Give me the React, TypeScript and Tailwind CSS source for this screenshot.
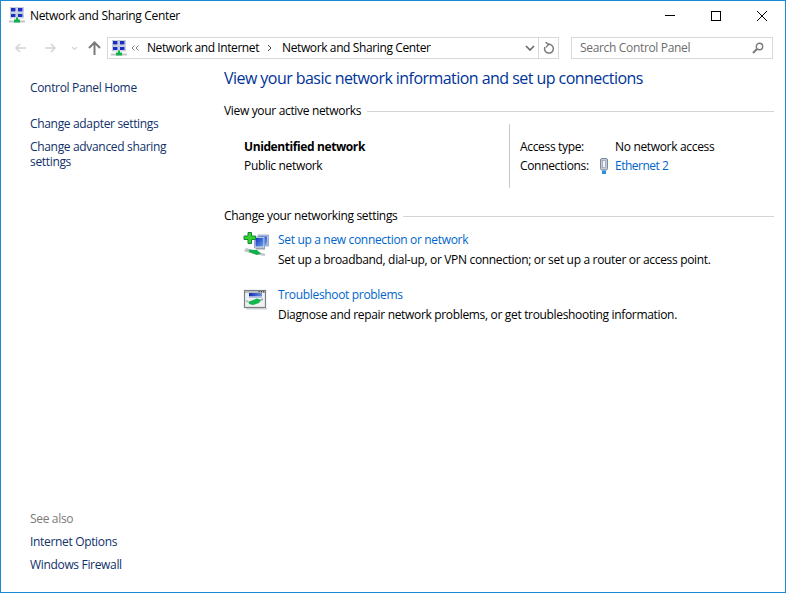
const font = { fontFamily: '"Open Sans", "Noto Sans", sans-serif' };

function NetIcon() {
  return (
    <svg width="16" height="16" viewBox="0 0 16 16" className="shrink-0">
      <rect x="1.5" y="0.5" width="6" height="5" fill="#e6ecf6" stroke="#a9b3c6" strokeWidth="0.6" />
      <rect x="2" y="1" width="4.5" height="3.5" fill="#1c2fc4" />
      <rect x="8.5" y="0.5" width="6" height="5" fill="#e6ecf6" stroke="#a9b3c6" strokeWidth="0.6" />
      <rect x="9" y="1" width="4.5" height="3.5" fill="#1c2fc4" />
      <rect x="1.5" y="6.5" width="6" height="4.5" fill="#e6ecf6" stroke="#a9b3c6" strokeWidth="0.6" />
      <rect x="2" y="7" width="4.5" height="3" fill="#1c2fc4" />
      <rect x="8.5" y="6.5" width="6" height="4.5" fill="#e6ecf6" stroke="#a9b3c6" strokeWidth="0.6" />
      <rect x="9" y="7" width="4.5" height="3" fill="#1c2fc4" />
      <rect x="0" y="13.5" width="16" height="2" fill="#c3c6ca" />
      <rect x="7" y="10.5" width="2" height="2.5" fill="#12b04a" />
      <rect x="5" y="12.5" width="6" height="3" fill="#12b04a" />
    </svg>
  );
}

function SetupIcon() {
  return (
    <svg width="28" height="28" viewBox="0 0 28 28">
      <defs>
        <linearGradient id="mon" x1="0" y1="0" x2="1" y2="1">
          <stop offset="0" stopColor="#0f33c4" />
          <stop offset="1" stopColor="#6f9fe8" />
        </linearGradient>
      </defs>
      <path d="M15 3h10.5v11H15z" fill="#a9c2ea" stroke="#8ea2c2" strokeWidth="0.8" />
      <path d="M16.5 4.5h7.5v8h-7.5z" fill="url(#mon)" />
      <path d="M11.5 5h10v11h-10z" fill="#dfe8f6" stroke="#7f94b8" strokeWidth="0.8" />
      <path d="M12.5 6h8v8.5h-8z" fill="url(#mon)" />
      <path d="M13 16h9v1.5h-9z" fill="#9aa0a8" />
      <path d="M1.5 17.5l2-1.5 15 5 4 1-1 2-5-1-15-3.5z" fill="#bfc3c8" />
      <path d="M6 17.5l8 0.5 4 3.5-4 1.5-8-3z" fill="#14b04c" />
      <path d="M5 0.5h3.5v3.5H12.5v3.5H8.5V11.5H5V7.5H1V4H5z" fill="#35d12e" stroke="#15853a" strokeWidth="1" />
    </svg>
  );
}

function TroubleIcon() {
  return (
    <svg width="28" height="24" viewBox="0 0 28 24">
      <defs>
        <linearGradient id="band" x1="0" y1="0" x2="1" y2="0">
          <stop offset="0" stopColor="#0f27b4" />
          <stop offset="1" stopColor="#6f93da" />
        </linearGradient>
      </defs>
      <rect x="1.5" y="3.5" width="21" height="17" fill="#eef0f1" stroke="#7c8186" strokeWidth="1.2" />
      <rect x="2" y="4" width="20" height="2" fill="#b8bcc0" />
      <rect x="15.5" y="4" width="1.3" height="1.3" fill="#444" />
      <rect x="17.8" y="4" width="1.3" height="1.3" fill="#444" />
      <rect x="20" y="4" width="1.3" height="1.3" fill="#444" />
      <rect x="6" y="6" width="13" height="3.5" fill="url(#band)" />
      <rect x="6" y="9.5" width="13" height="1.5" fill="#b6c4e2" />
      <path d="M3 13.5l3 2M16 14l4-2" stroke="#a4a8ac" strokeWidth="1.4" />
      <path d="M6 14.5l8-3 4 1.5-2 3-6 2-4-1z" fill="#12b84e" />
      <rect x="3" y="21" width="21" height="1.5" fill="#cdd0d2" />
    </svg>
  );
}

function EthIcon() {
  return (
    <svg width="10" height="17" viewBox="0 0 10 17">
      <rect x="1.5" y="0.5" width="7" height="11.5" rx="1.5" fill="#c3cbd6" stroke="#7e8a9c" strokeWidth="1" />
      <rect x="3.5" y="2.5" width="3" height="7" fill="#f1f4f8" stroke="#8a94a4" strokeWidth="0.6" />
      <rect x="3" y="12.5" width="4" height="3.5" fill="#2f8fd8" />
    </svg>
  );
}

function Section({ title }: { title: string }) {
  return (
    <div className="flex items-center gap-[6px] h-4 text-[12px] text-black">
      <span className="-mt-px">{title}</span>
      <div className="flex-1 h-px bg-[#d5d5d5]" />
    </div>
  );
}

function Task({ icon, link, text }: { icon: React.ReactNode; link: string; text: string }) {
  return (
    <div className="flex">
      <div className="w-[54px] pl-[19px] h-[30px]">{icon}</div>
      <div className="flex flex-col gap-[4px]">
        <div className="h-4 leading-4 text-[#0066cc]">{link}</div>
        <div className="h-4 leading-4 text-black">{text}</div>
      </div>
    </div>
  );
}

export default function App() {
  return (
    <div
      className="w-[786px] h-[593px] bg-white border border-[#1a8ad4] flex flex-col text-[12px] overflow-hidden tracking-[-0.33px]"
      style={font}
    >
      <div className="h-[30px] flex items-start shrink-0">
        <div className="pl-[8px] pt-[6px]"><NetIcon /></div>
        <div className="pl-[5px] pt-[7px] leading-4 text-black">Network and Sharing Center</div>
        <div className="ml-auto flex h-[29px] items-center">
          <div className="w-[46px] flex justify-center">
            <div className="w-[10px] h-px bg-black" />
          </div>
          <div className="w-[46px] flex justify-center">
            <div className="w-[10px] h-[10px] border border-black" />
          </div>
          <div className="w-[46px] flex justify-center">
            <svg width="10" height="10" viewBox="0 0 10 10"><path d="M0 0l10 10M10 0L0 10" stroke="#000" strokeWidth="1" /></svg>
          </div>
        </div>
      </div>

      <div className="h-[24px] mt-[5px] flex items-center shrink-0">
        <div className="flex items-center w-[106px] pl-[13px]">
          <svg width="13" height="12" viewBox="0 0 13 12"><path d="M12 6H2M6 2L2 6l4 4" stroke="#d4d4d4" strokeWidth="1.6" fill="none" /></svg>
          <svg width="13" height="12" viewBox="0 0 13 12" className="ml-[17px]"><path d="M1 6h10M7 2l4 4-4 4" stroke="#d4d4d4" strokeWidth="1.6" fill="none" /></svg>
          <svg width="7" height="5" viewBox="0 0 7 5" className="ml-[14px]"><path d="M1 1l2.5 2.5L6 1" stroke="#d4d4d4" strokeWidth="1.2" fill="none" /></svg>
          <svg width="13" height="14" viewBox="0 0 13 14" className="ml-[10px]"><path d="M6.5 14V2M1 7l5.5-5.5L12 7" stroke="#7a7a7a" strokeWidth="2" fill="none" /></svg>
        </div>
        <div className="w-[452px] h-[22px] border border-[#d9d9d9] flex items-center">
          <div className="pl-[3px]"><NetIcon /></div>
          <svg width="8" height="6" viewBox="0 0 8 6" className="ml-[4px]"><path d="M3.5 0.5L1 3l2.5 2.5M7.5 0.5L5 3l2.5 2.5" stroke="#808080" strokeWidth="1" fill="none" /></svg>
          <span className="ml-[8px] text-black tracking-[-0.42px]">Network and Internet</span>
          <svg width="5" height="8" viewBox="0 0 5 8" className="ml-[8px]"><path d="M1 1l3 3-3 3" stroke="#444" fill="none" /></svg>
          <span className="ml-[10px] text-black tracking-[-0.38px]">Network and Sharing Center</span>
          <svg width="10" height="6" viewBox="0 0 10 6" className="ml-auto mr-[3px]"><path d="M1 1l4 4 4-4" stroke="#666" strokeWidth="1.6" fill="none" /></svg>
          <div className="w-[20px] h-full border-l border-[#d9d9d9] flex items-center justify-center">
            <svg width="12" height="13" viewBox="0 0 12 13"><path d="M5 2.4A4.4 4.4 0 1 1 1.9 5" stroke="#7a7a7a" strokeWidth="1.5" fill="none" /><path d="M2.5 0.2L5.6 2.4 3 5.4" stroke="#7a7a7a" strokeWidth="1.4" fill="none" /></svg>
          </div>
        </div>
        <div className="ml-[12px] w-[202px] h-[22px] border border-[#d9d9d9] flex items-center pl-[8px] pr-[8px]">
          <span className="text-[#6d6d6d]">Search Control Panel</span>
          <svg width="12" height="12" viewBox="0 0 12 12" className="ml-auto"><circle cx="7.5" cy="4.5" r="3.2" stroke="#7a7a7a" strokeWidth="1.4" fill="none" /><path d="M5 7L1 11" stroke="#7a7a7a" strokeWidth="2" /></svg>
        </div>
      </div>

      <div className="flex-1 flex">
        <div className="w-[223px] shrink-0 pl-[29px] flex flex-col text-[#10306a]">
          <div className="mt-[20px] h-4 leading-4">Control Panel Home</div>
          <div className="mt-[20px] h-4 leading-4">Change adapter settings</div>
          <div className="mt-[7px] w-[170px] leading-[15px]">Change advanced sharing settings</div>
          <div className="mt-auto text-[#7a7a7a] h-4 leading-4">See also</div>
          <div className="mt-[7px] h-4 leading-4">Internet Options</div>
          <div className="mt-[7px] mb-[19px] h-4 leading-4">Windows Firewall</div>
        </div>

        <div className="flex-1 pr-[11px] flex flex-col">
          <div className="mt-[7px] text-[16px] leading-[22px] text-[#003399] tracking-[-0.55px]">View your basic network information and set up connections</div>
          <div className="mt-[14px]"><Section title="View your active networks" /></div>
          <div className="mt-[5px] h-[64px] flex">
            <div className="w-[285px] pl-[20px] pt-[15px]">
              <div className="h-4 leading-4 font-bold text-black tracking-[-0.4px]">Unidentified network</div>
              <div className="mt-[3px] h-4 leading-4 text-black">Public network</div>
            </div>
            <div className="border-l border-[#c8c8c8] pl-[10px] pt-[15px] flex-1">
              <div className="flex h-4 leading-4 text-black">
                <span className="w-[95px]">Access type:</span>
                <span>No network access</span>
              </div>
              <div className="flex items-center mt-[3px] h-4 leading-4">
                <span className="w-[79px] text-black">Connections:</span>
                <span className="w-[16px]"><EthIcon /></span>
                <span className="text-[#0066cc] tracking-[-0.5px]">Ethernet 2</span>
              </div>
            </div>
          </div>
          <div className="mt-[20px]"><Section title="Change your networking settings" /></div>
          <div className="mt-[8px]">
            <Task icon={<SetupIcon />} link="Set up a new connection or network" text="Set up a broadband, dial-up, or VPN connection; or set up a router or access point." />
          </div>
          <div className="mt-[19px]">
            <Task icon={<TroubleIcon />} link="Troubleshoot problems" text="Diagnose and repair network problems, or get troubleshooting information." />
          </div>
        </div>
      </div>
    </div>
  );
}
